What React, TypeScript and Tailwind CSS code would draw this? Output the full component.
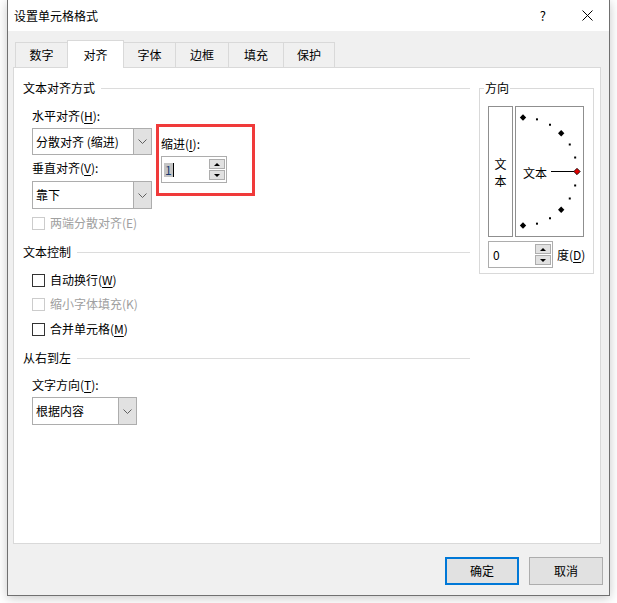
import React from 'react';

const font = "font-['Noto_Sans_CJK_SC','Noto_Sans',sans-serif]";

const U = ({ c }: { c: string }) => <span className="underline underline-offset-2">{c}</span>;

const Chevron = () => (
  <svg width="9" height="5" viewBox="0 0 9 5">
    <path d="M0.5 0.5 L4.5 4.5 L8.5 0.5" stroke="#606060" strokeWidth="1" fill="none" />
  </svg>
);

const SpinButtons = () => (
  <div className="flex flex-col gap-[1px]">
    <div className="w-[16px] h-[10px] bg-[#e1e1e1] border border-[#adadad] flex items-center justify-center">
      <svg width="6" height="3" viewBox="0 0 6 3"><path d="M0 3 L3 0 L6 3 Z" fill="#000" /></svg>
    </div>
    <div className="w-[16px] h-[10px] bg-[#e1e1e1] border border-[#adadad] flex items-center justify-center">
      <svg width="6" height="3" viewBox="0 0 6 3"><path d="M0 0 L6 0 L3 3 Z" fill="#000" /></svg>
    </div>
  </div>
);

const Heading = ({ text }: { text: string }) => (
  <div className="flex items-center gap-[6px] h-[16px]">
    <span className="text-[12px] leading-[16px] text-black">{text}</span>
    <div className="flex-1 h-px bg-[#dcdcdc]" />
  </div>
);

const Check = ({ children, disabled }: { children: React.ReactNode; disabled?: boolean }) => (
  <div className="flex items-center h-[16px] gap-[5px]">
    <div className={`w-[13px] h-[13px] bg-white border ${disabled ? 'border-[#cccccc]' : 'border-[#333333]'}`} />
    <span className={`text-[12px] leading-[16px] ${disabled ? 'text-[#a0a0a0]' : 'text-black'}`}>{children}</span>
  </div>
);

function Dial() {
  const cx = 7;
  const cy = 64.5;
  const r = 54;
  const angles = [-90, -75, -60, -45, -30, -15, 0, 15, 30, 45, 60, 75, 90];
  return (
    <svg width="67" height="129" viewBox="0 0 67 129">
      {angles.map((a) => {
        const t = (a * Math.PI) / 180;
        const x = cx + r * Math.cos(t);
        const y = cy + r * Math.sin(t);
        if (a % 45 === 0) {
          const s = 3.2;
          return (
            <polygon
              key={a}
              points={`${x},${y - s} ${x + s},${y} ${x},${y + s} ${x - s},${y}`}
              fill={a === 0 ? '#e00000' : '#000'}
              stroke="#000"
              strokeWidth={a === 0 ? 0.8 : 0}
            />
          );
        }
        return <rect key={a} x={x - 1} y={y - 1} width="2" height="2" fill="#000" />;
      })}
      <line x1="35" y1={cy} x2="58" y2={cy} stroke="#000" strokeWidth="1" />
      <text x="7" y="71" fontSize="12" fill="#000" fontFamily="Noto Sans CJK SC, sans-serif">文本</text>
    </svg>
  );
}

export default function App() {
  return (
    <div className={`w-[617px] h-[603px] bg-white ${font} overflow-hidden`}>
      <div className="ml-[7px] w-[603px] h-[596px] bg-[#f0f0f0] border-x border-b border-[#707070] shadow-[0_2px_10px_rgba(0,0,0,0.22)] flex flex-col">
        {/* title bar */}
        <div className="h-[31px] bg-white flex items-center pl-[6px]">
          <span className="text-[12px] text-black">设置单元格格式</span>
          <span className="ml-auto mr-[36px] text-[13px] text-black">?</span>
          <svg className="mr-[16px]" width="11" height="11" viewBox="0 0 11 11">
            <path d="M0.5 0.5 L10.5 10.5 M10.5 0.5 L0.5 10.5" stroke="#000" strokeWidth="1" />
          </svg>
        </div>

        {/* tabs */}
        <div className="mt-[9px] pl-[7px] flex items-end h-[27px] relative z-10">
          <div className="w-[52px] h-[25px] border-l border-t border-[#d9d9d9] flex items-center justify-center text-[12px] text-black">数字</div>
          <div className="w-[57px] h-[28px] -mb-[1px] bg-white border border-b-0 border-[#d9d9d9] flex items-center justify-center text-[12px] text-black">对齐</div>
          <div className="w-[51px] h-[25px] border-t border-[#d9d9d9] flex items-center justify-center text-[12px] text-black">字体</div>
          <div className="w-[53px] h-[25px] border-l border-t border-[#d9d9d9] flex items-center justify-center text-[12px] text-black">边框</div>
          <div className="w-[55px] h-[25px] border-l border-t border-[#d9d9d9] flex items-center justify-center text-[12px] text-black">填充</div>
          <div className="w-[52px] h-[25px] border-x border-t border-[#d9d9d9] flex items-center justify-center text-[12px] text-black">保护</div>
        </div>

        {/* panel */}
        <div className="ml-[5px] w-[588px] h-[477px] bg-white border border-[#d9d9d9] flex pl-[9px] pt-[12px]">
          {/* left column */}
          <div className="w-[447px] flex flex-col">
            <Heading text="文本对齐方式" />
            <div className="ml-[9px] mt-[12px] flex">
              <div className="flex flex-col w-[120px]">
                <div className="h-[16px] text-[12px] leading-[16px] text-black">水平对齐(<U c="H" />):</div>
                <div className="mt-[4px] w-[120px] h-[27px] border border-[#adadad] bg-white flex">
                  <span className="flex-1 pl-[3px] text-[12px] leading-[25px] text-black">分散对齐 (缩进)</span>
                  <div className="w-[18px] h-full bg-[#e1e1e1] border-l border-[#adadad] flex items-center justify-center">
                    <Chevron />
                  </div>
                </div>
                <div className="mt-[5px] h-[16px] text-[12px] leading-[16px] text-black">垂直对齐(<U c="V" />):</div>
                <div className="mt-[5px] w-[120px] h-[28px] border border-[#adadad] bg-white flex">
                  <span className="flex-1 pl-[3px] text-[12px] leading-[26px] text-black">靠下</span>
                  <div className="w-[18px] h-full bg-[#e1e1e1] border-l border-[#adadad] flex items-center justify-center">
                    <Chevron />
                  </div>
                </div>
              </div>
              {/* indent, boxed in red */}
              <div className="ml-[4px] mt-[16px] w-[99px] h-[72px] border-[3px] border-[#f03a3a] pl-[2px] pt-[9px] flex flex-col">
                <div className="h-[16px] text-[12px] leading-[16px] text-black">缩进(<U c="I" />):</div>
                <div className="mt-[4px] w-[66px] h-[27px] border border-[#adadad] bg-white flex items-center pl-[2px] pr-[1px]">
                  <div className="flex items-center flex-1">
                    <span className="bg-[#c4c4c4] text-[#1a3a70] text-[12px] leading-[14px] px-[1px]">1</span>
                    <span className="w-px h-[14px] bg-black" />
                  </div>
                  <SpinButtons />
                </div>
              </div>
            </div>
            <div className="ml-[9px] mt-[6px]">
              <Check disabled>两端分散对齐(E)</Check>
            </div>

            <div className="mt-[13px]">
              <Heading text="文本控制" />
            </div>
            <div className="ml-[9px] mt-[12px]">
              <Check>自动换行(<U c="W" />)</Check>
            </div>
            <div className="ml-[9px] mt-[8px]">
              <Check disabled>缩小字体填充(K)</Check>
            </div>
            <div className="ml-[9px] mt-[9px]">
              <Check>合并单元格(<U c="M" />)</Check>
            </div>

            <div className="mt-[13px]">
              <Heading text="从右到左" />
            </div>
            <div className="ml-[9px] mt-[11px] h-[16px] text-[12px] leading-[16px] text-black">文字方向(<U c="T" />):</div>
            <div className="ml-[9px] mt-[4px] w-[105px] h-[28px] border border-[#adadad] bg-white flex">
              <span className="flex-1 pl-[3px] text-[12px] leading-[26px] text-black">根据内容</span>
              <div className="w-[18px] h-full bg-[#e1e1e1] border-l border-[#adadad] flex items-center justify-center">
                <Chevron />
              </div>
            </div>
          </div>

          {/* orientation group */}
          <div className="ml-[9px] w-[115px] h-[194px] flex flex-col">
            <div className="flex h-[16px]">
              <div className="w-[5px] h-[8px] self-end border-l border-t border-[#d9d9d9]" />
              <span className="px-[1px] text-[12px] leading-[16px] text-black">方向</span>
              <div className="flex-1 h-[8px] self-end border-r border-t border-[#d9d9d9]" />
            </div>
            <div className="flex-1 border-x border-b border-[#d9d9d9] pl-[8px] pt-[10px]">
              <div className="flex gap-[2px]">
                <div className="w-[25px] h-[131px] border border-[#8f8f8f] flex flex-col items-center justify-center text-[12px] text-black">
                  <div className="h-[17px] leading-[17px]">文</div>
                  <div className="h-[17px] leading-[17px]">本</div>
                </div>
                <div className="w-[69px] h-[131px] border border-[#8f8f8f]">
                  <Dial />
                </div>
              </div>
              <div className="mt-[4px] flex items-center">
                <div className="w-[65px] h-[27px] border border-[#adadad] bg-white flex items-center pl-[4px] pr-[1px]">
                  <span className="flex-1 text-[12px] text-black">0</span>
                  <SpinButtons />
                </div>
                <span className="ml-[4px] text-[12px] text-black">度(<U c="D" />)</span>
              </div>
            </div>
          </div>
        </div>

        {/* buttons */}
        <div className="mt-[13px] flex justify-end gap-[10px] pr-[6px]">
          <button className="w-[74px] h-[28px] bg-[#e1e1e1] border-2 border-[#0078d7] text-[12px] text-black">确定</button>
          <button className="w-[74px] h-[28px] bg-[#e1e1e1] border border-[#adadad] text-[12px] text-black">取消</button>
        </div>
      </div>
    </div>
  );
}
